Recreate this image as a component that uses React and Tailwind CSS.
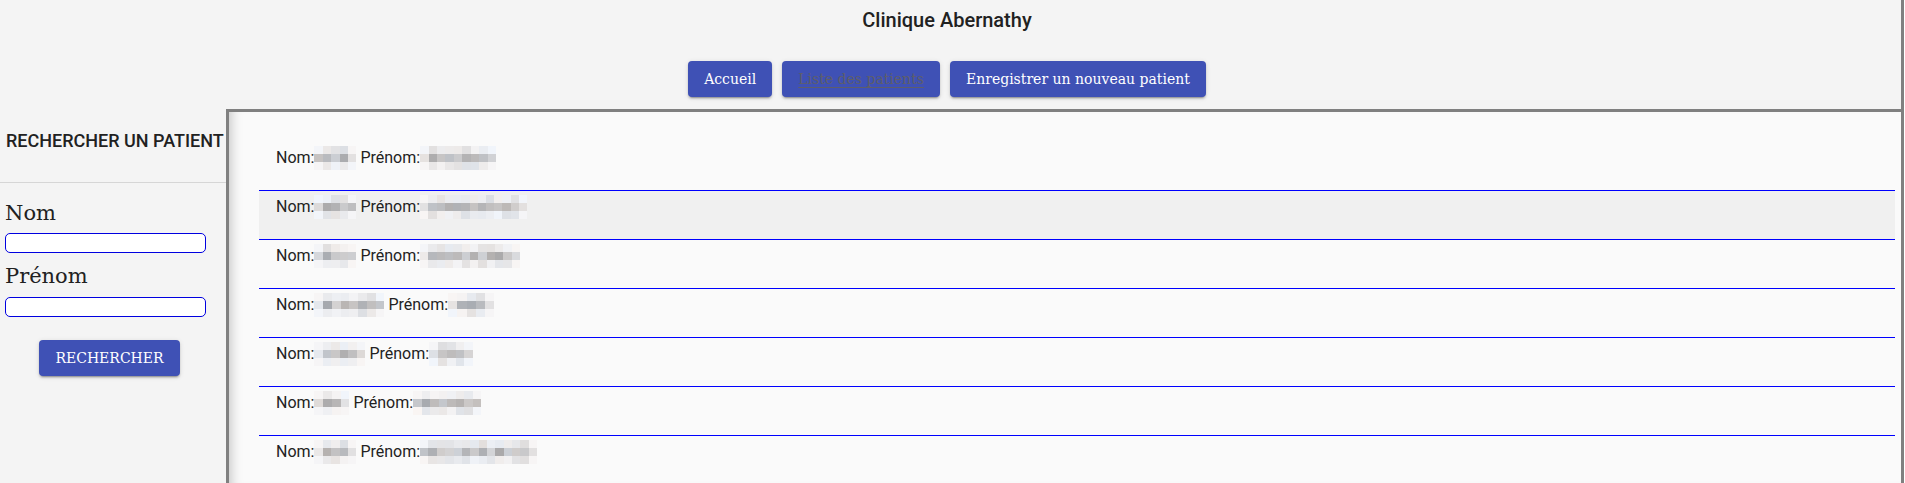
import React from "react";

const rows = [
  { n: 42, p: 76 },
  { n: 42, p: 107 },
  { n: 42, p: 100 },
  { n: 70, p: 46 },
  { n: 51, p: 44 },
  { n: 35, p: 68 },
  { n: 42, p: 117 },
];

function rnd(a, b, c) {
  const x = Math.sin(a * 127.1 + b * 311.7 + c * 74.7) * 43758.5453;
  return x - Math.floor(x);
}

function Mosaic({ w, seed }) {
  const cols = Math.max(3, Math.round(w / 8.4));
  const cells = [];
  for (let r = 0; r < 3; r++) {
    for (let c = 0; c < cols; c++) {
      const v = rnd(seed, r, c);
      let g = r === 1 ? 168 + Math.round(v * 45) : 222 + Math.round(v * 22);
      if (c === 0 || c === cols - 1) g = Math.min(245, g + 22);
      const tint = Math.round((rnd(seed + 7, r, c) - 0.5) * 8);
      cells.push(
        <span
          key={r + "-" + c}
          style={{ backgroundColor: `rgb(${g + tint},${g},${g - tint + 2})` }}
        />
      );
    }
  }
  return (
    <span
      className="inline-grid align-top h-[24px]"
      style={{ width: w, gridTemplateColumns: `repeat(${cols}, 1fr)`, gridTemplateRows: "repeat(3, 1fr)" }}
    >
      {cells}
    </span>
  );
}

const btn =
  "h-9 px-4 rounded-[4px] bg-[#3f51b5] text-white text-[14px] font-['DejaVu_Serif',serif] shadow-[0_3px_1px_-2px_rgba(0,0,0,0.2),0_2px_2px_0_rgba(0,0,0,0.14),0_1px_5px_0_rgba(0,0,0,0.12)]";

export default function App() {
  return (
    <div className="w-[1904px] h-[483px] overflow-hidden bg-[#f4f4f4] border-r-[3px] border-[#808080] flex flex-col font-['Roboto',sans-serif] text-[#212121]">
      <header className="h-[109px] shrink-0 pr-[7px] flex flex-col items-center pt-[4px]">
        <h1 className="text-[20px] leading-[32px] font-medium">Clinique Abernathy</h1>
        <nav className="mt-[25px] flex gap-[10px]">
          <button className={btn}>Accueil</button>
          <button className={btn + " !text-[#5e5e6a] underline underline-offset-[3px]"}>Liste des patients</button>
          <button className={btn}>Enregistrer un nouveau patient</button>
        </nav>
      </header>
      <div className="flex flex-1 min-h-0">
        <aside className="w-[226px] shrink-0 flex flex-col">
          <h2 className="pt-[20px] pl-[6px] h-[74px] text-[18px] leading-[24px] font-medium border-b border-[#d6d6d6] whitespace-nowrap">
            RECHERCHER UN PATIENT
          </h2>
          <div className="w-[209px] pl-[5px] flex flex-col font-['DejaVu_Serif',serif]">
            <label className="mt-[18px] text-[21px] leading-[24px]">Nom</label>
            <input className="mt-[8px] w-[201px] h-[20px] bg-white border border-[#0000e0] rounded-[5px]" />
            <label className="mt-[11px] text-[21px] leading-[24px]">Prénom</label>
            <input className="mt-[9px] w-[201px] h-[20px] bg-white border border-[#0000e0] rounded-[5px]" />
            <button className={btn + " self-center mt-[23px] ml-[5px]"}>RECHERCHER</button>
          </div>
        </aside>
        <main className="flex-1 border-t-[3px] border-l-[3px] border-[#808080] bg-[#fafafa] shadow-[inset_12px_0_12px_-10px_rgba(0,0,0,0.22)] pt-[30px] pl-[30px] pr-[6px]">
          <ul>
            {rows.map((r, i) => (
              <li
                key={i}
                className={
                  "h-[49px] border-b border-[#0000ff] pl-[17px] pt-[4px] text-[16px] leading-[24px] text-[#222] whitespace-nowrap " +
                  (i === 1 ? "bg-[#f0f0f0]" : "")
                }
              >
                Nom:<Mosaic w={r.n} seed={i * 2 + 1} /> Prénom:<Mosaic w={r.p} seed={i * 2 + 2} />
              </li>
            ))}
          </ul>
        </main>
      </div>
    </div>
  );
}
